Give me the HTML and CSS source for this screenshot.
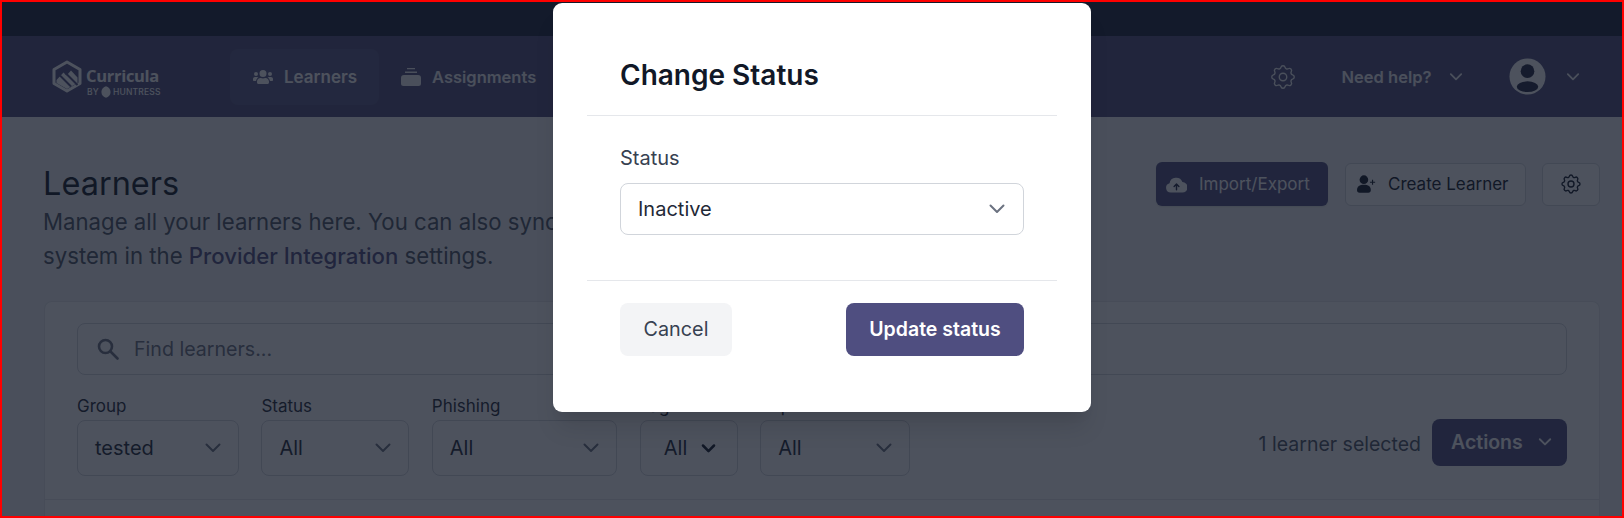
FILE: index.html
```html
<!DOCTYPE html>
<html lang="en">
<head>
<meta charset="utf-8">
<title>Learners</title>
<link rel="stylesheet" href="styles.css">
</head>
<body>
<svg class="defs" aria-hidden="true">
  <symbol id="gear" viewBox="0 0 24 24"><path fill="none" stroke="currentColor" stroke-linecap="round" stroke-linejoin="round" d="M10.325 4.317c.426-1.756 2.924-1.756 3.35 0a1.724 1.724 0 002.573 1.066c1.543-.94 3.31.826 2.37 2.37a1.724 1.724 0 001.065 2.572c1.756.426 1.756 2.924 0 3.35a1.724 1.724 0 00-1.066 2.573c.94 1.543-.826 3.31-2.37 2.37a1.724 1.724 0 00-2.572 1.065c-.426 1.756-2.924 1.756-3.35 0a1.724 1.724 0 00-2.573-1.066c-1.543.94-3.31-.826-2.37-2.37a1.724 1.724 0 00-1.065-2.572c-1.756-.426-1.756-2.924 0-3.35a1.724 1.724 0 001.066-2.573c-.94-1.543.826-3.31 2.37-2.37.996.608 2.296.07 2.572-1.065z"/><circle cx="12" cy="12" r="3" fill="none" stroke="currentColor"/></symbol>
  <symbol id="chev" viewBox="0 0 20 20"><path fill="none" stroke="currentColor" stroke-linecap="round" stroke-linejoin="round" d="M3.500 6.500 10 13l6.500-6.500"/></symbol>
</svg>
<div class="frame">
  <div class="topbar"></div>
  <nav class="nav">
    <div class="logo">
      <svg class="logo-mark" viewBox="0 0 30 33"><path fill="none" stroke="currentColor" stroke-width="3" stroke-linejoin="round" d="M15 2 28 9.500v14L15 31 2 23.500v-14z"/><path fill="currentColor" d="m4.500 20 7-7.500 3 3 4.500-5 6.500 7V23L15 29 4.500 23z"/><path fill="none" stroke="#4f4e7c" stroke-width="2" d="m8 15.500 11 11m-5.500-13.500 12 12"/></svg>
      <div class="logo-text">
        <span class="logo-name">Curricula</span>
        <span class="logo-by">BY <svg class="logo-cone" viewBox="0 0 12 14"><path fill="currentColor" d="M6 0c3 1 5.500 3 5.500 7S9 13 6 14C3 13 .5 11 .5 7S3 1 6 0z"/></svg>HUNTRESS</span>
      </div>
    </div>
    <a class="nav-item nav-active">
      <svg class="nav-icon" viewBox="0 0 640 512"><path fill="currentColor" d="M96 224a64 64 0 1 0 0-128 64 64 0 0 0 0 128zm448 0a64 64 0 1 0 0-128 64 64 0 0 0 0 128zm32 32h-64c-17.600 0-33.500 7.100-45.100 18.600 40.300 22.100 68.900 62 75.100 109.400h66c17.700 0 32-14.300 32-32v-32c0-35.300-28.700-64-64-64zm-256 0a112 112 0 1 0 0-224 112 112 0 0 0 0 224zm76.800 32h-8.300c-20.800 10-43.900 16-68.500 16s-47.600-6-68.500-16h-8.300C179.600 288 128 339.600 128 403.200V432c0 26.500 21.500 48 48 48h288c26.500 0 48-21.500 48-48v-28.800c0-63.600-51.600-115.200-115.200-115.200zm-223.700-13.400C161.500 263.100 145.600 256 128 256H64c-35.300 0-64 28.700-64 64v32c0 17.700 14.300 32 32 32h65.900c6.300-47.400 34.900-87.300 75.200-109.400z"/></svg>
      <span>Learners</span>
    </a>
    <a class="nav-item nav-second">
      <svg class="nav-icon" viewBox="0 0 20 18"><path fill="currentColor" d="M6 0h8v1.300H6zM4 3.500h12v1.500H4zM3 7h14a3 3 0 0 1 3 3v5.500a2.500 2.500 0 0 1-2.500 2.500h-15A2.500 2.500 0 0 1 0 15.500V10a3 3 0 0 1 3-3z"/></svg>
      <span>Assignments</span>
    </a>
    <div class="nav-right">
      <svg class="nav-gear"><use href="#gear"/></svg>
      <span class="help">Need help?</span>
      <svg class="chev-nav"><use href="#chev"/></svg>
      <svg class="avatar" viewBox="0 0 38 38"><defs><clipPath id="av"><circle cx="19" cy="19" r="18.500"/></clipPath></defs><circle cx="19" cy="19" r="18.500" fill="currentColor"/><g clip-path="url(#av)" fill="#212640"><circle cx="19" cy="13.500" r="7"/><ellipse cx="19" cy="29.500" rx="11" ry="5.500"/></g></svg>
      <svg class="chev-nav chev-last"><use href="#chev"/></svg>
    </div>
  </nav>
  <main class="main">
    <header class="page-head">
      <div class="page-title">
        <h1>Learners</h1>
        <p>Manage all your learners here. You can also sync learners from your HR<br>system in the <strong>Provider Integration</strong> settings.</p>
      </div>
      <div class="page-actions">
        <button class="btn btn-primary">
          <svg class="btn-icon" viewBox="0 0 22 17"><path fill="currentColor" d="M5 17a5 5 0 0 1-1.300-9.800A7 7 0 0 1 17.200 6 5.500 5.500 0 0 1 17 17z"/><path fill="none" stroke="#212640" stroke-width="1.500" stroke-linecap="round" stroke-linejoin="round" d="M11 14V8M8.500 10.500 11 8l2.500 2.500"/></svg>
          <span>Import/Export</span>
        </button>
        <button class="btn btn-outline">
          <svg class="btn-icon" viewBox="0 0 22 20"><circle cx="8" cy="5" r="5" fill="currentColor"/><path fill="currentColor" d="M0 17c0-4 3-6 8-6s8 2 8 6c0 2-1 3-3 3H3c-2 0-3-1-3-3z"/><path fill="none" stroke="currentColor" stroke-width="1.300" d="M18 5v6M15 8h6"/></svg>
          <span>Create Learner</span>
        </button>
        <button class="btn btn-outline btn-square" aria-label="Settings"><svg class="btn-gear"><use href="#gear"/></svg></button>
      </div>
    </header>
    <section class="card">
      <div class="card-body">
        <div class="search">
          <svg class="search-icon" viewBox="0 0 22 22"><circle cx="8.500" cy="8.500" r="6.500" fill="none" stroke="currentColor" stroke-width="2.600"/><path stroke="currentColor" stroke-width="2.600" stroke-linecap="round" d="m13.500 13.500 7 7"/></svg>
          <span>Find learners...</span>
        </div>
        <div class="filters">
          <label class="filter f-group"><span class="filter-label">Group</span><span class="select"><span>tested</span><svg class="chev"><use href="#chev"/></svg></span></label>
          <label class="filter f-status"><span class="filter-label">Status</span><span class="select"><span>All</span><svg class="chev"><use href="#chev"/></svg></span></label>
          <label class="filter f-phish"><span class="filter-label">Phishing</span><span class="select"><span>All</span><svg class="chev"><use href="#chev"/></svg></span></label>
          <label class="filter f-tag"><span class="filter-label">Tag</span><span class="select select-tight"><span>All</span><svg class="chev chev-dark"><use href="#chev"/></svg></span></label>
          <label class="filter f-report"><span class="filter-label">Report</span><span class="select"><span>All</span><svg class="chev"><use href="#chev"/></svg></span></label>
          <div class="bulk">
            <span class="bulk-count">1 learner selected</span>
            <button class="btn-actions"><span>Actions</span><svg class="chev-actions"><use href="#chev"/></svg></button>
          </div>
        </div>
      </div>
      <div class="card-rule"></div>
    </section>
  </main>
  <div class="overlay">
    <div class="modal">
      <h2 class="modal-title">Change Status</h2>
      <div class="modal-body">
        <div class="modal-label">Status</div>
        <div class="modal-select"><span>Inactive</span><svg class="modal-chev"><use href="#chev"/></svg></div>
      </div>
      <div class="modal-foot">
        <button class="m-btn m-cancel">Cancel</button>
        <button class="m-btn m-update">Update status</button>
      </div>
    </div>
  </div>
</div>
</body>
</html>
```
FILE: styles.css
```css
* { box-sizing: border-box; }
html, body { margin: 0; padding: 0; }
body { font-family: Inter, "Liberation Sans", sans-serif; background: #f3f4f6; overflow: hidden; }
.defs { position: absolute; width: 0; height: 0; }
svg { display: block; flex: none; stroke-width: 2; }

.frame { position: relative; width: 1624px; height: 518px; border: 2px solid #ff0000; overflow: hidden; background: #f3f4f6; color: #111827; }

.topbar { height: 34px; background: #19203b; }
.nav { height: 81px; background: #4f4e7c; display: flex; align-items: center; padding-left: 50px; color: #fff; }
.logo { display: flex; align-items: center; gap: 4px; width: 178px; }
.logo-mark { width: 30px; height: 33px; color: #fff; }
.logo-text { display: flex; flex-direction: column; }
.logo-name { font-family: "Open Sans", sans-serif; font-weight: 700; font-size: 16.500px; line-height: 20px; letter-spacing: -0.3px; margin-top: 10px; }
.logo-by { display: flex; align-items: center; gap: 2px; font-size: 8.500px; font-weight: 500; line-height: 12px; margin-left: 1px; letter-spacing: 0.2px; }
.logo-cone { width: 10px; height: 12px; }
.nav-item { display: flex; align-items: center; gap: 11px; height: 56px; padding: 0 23px; border-radius: 8px; font-size: 17px; font-weight: 600; color: #fff; }
.nav-active { background: #5a5986; width: 149px; }
.nav-second { font-size: 16.500px; padding-left: 22px; color: #f3f4f6; }
.nav-icon { width: 20px; height: 18px; }
.nav-right { margin-left: auto; display: flex; align-items: center; color: #f3f4f6; padding-right: 41px; }
.nav-gear { width: 30px; height: 30px; margin-right: 44px; stroke-width: 1.100; }
.help { font-size: 16.500px; font-weight: 600; }
.chev-nav { width: 16px; height: 16px; margin-left: 16.500px; stroke-width: 2.200; }
.avatar { width: 37px; height: 37px; margin-left: 45px; color: #fff; }
.chev-last { margin-left: 19px; }

.main { padding: 42px 22px 0 42px; }
.page-head { display: flex; justify-content: space-between; align-items: flex-start; }
.page-title { margin-left: -1px; }
.page-title h1 { margin: 4px 0 0; font-size: 32.500px; line-height: 42px; font-weight: 400; color: #111827; }
.page-title p { margin: 0; font-size: 22.200px; line-height: 34px; color: #4b5563; }
.page-title strong { font-weight: 500; color: #4f4e80; }
.page-actions { display: flex; align-items: center; gap: 17px; margin-top: 3px; }
.btn { display: flex; align-items: center; font-family: inherit; font-size: 17px; border-radius: 6px; height: 44px; }
.btn-primary { background: #4f4e80; border: 0; color: #fff; width: 172px; padding: 0 0 0 10px; gap: 12px; box-shadow: 0 1px 2px rgba(0,0,0,.1); }
.btn-outline { background: #fff; border: 1px solid #d1d5db; color: #111827; width: 181px; height: 43px; padding: 0 0 0 11px; gap: 12px; }
.btn-square { width: 58px; justify-content: center; padding: 0; margin-left: -1px; }
.btn-icon { width: 19px; height: 18px; flex: none; }
.btn-primary .btn-icon { width: 21px; height: 17px; color: #fff; }
.btn-gear { width: 24px; height: 24px; stroke-width: 1.400; }

.card { margin-top: 28px; background: #fff; border: 1px solid #e5e7eb; border-bottom: 0; border-radius: 8px 8px 0 0; height: 240px; }
.card-body { padding: 21px 32px 0 32px; }
.search { display: flex; align-items: center; gap: 15px; height: 52px; padding-left: 19px; border: 1px solid #d1d5db; border-radius: 8px; color: #6b7280; font-size: 19.600px; }
.search-icon { width: 22px; height: 22px; color: #6b7280; }
.filters { display: flex; align-items: flex-end; gap: 22.400px; margin-top: 22px; }
.filter { display: flex; flex-direction: column; }
.filter-label { font-size: 17px; line-height: 18px; color: #1f2937; height: 23px; }
.f-group { width: 162px; }
.f-status { width: 148px; }
.f-phish { width: 185.600px; }
.f-tag { width: 98px; }
.f-report { width: 150px; }
.select { display: flex; align-items: center; justify-content: space-between; height: 56px; padding: 0 15.500px 0 17px; border: 1px solid #d1d5db; border-radius: 8px; font-size: 20px; color: #1f2937; background: #fff; }
.select-tight { padding: 0 20px 0 23px; }
.chev { width: 20px; height: 20px; color: #6b7280; }
.chev-dark { width: 17px; height: 17px; color: #111827; stroke-width: 3; }
.bulk { margin-left: auto; display: flex; align-items: center; align-self: flex-end; height: 47px; margin-bottom: 10px; }
.bulk-count { font-size: 19.500px; color: #4b5563; margin: 2px 11px 0 0; }
.btn-actions { display: flex; align-items: center; width: 135px; height: 47px; padding: 0 0 2px 19px; border: 0; border-radius: 8px; background: #4f4e80; color: #fff; font-family: inherit; font-size: 19.500px; font-weight: 600; }
.chev-actions { width: 16px; height: 16px; margin-left: 14px; stroke-width: 2.400; }
.card-rule { height: 1px; background: #e5e7eb; margin-top: 23px; }

.overlay { position: absolute; inset: 0; background: rgba(17,24,39,.75); padding: 1px 0 0 551px; }
.modal { width: 538px; height: 409px; background: #fff; border-radius: 9px; padding: 0 34px; box-shadow: 0 20px 25px -5px rgba(0,0,0,.1), 0 10px 10px -5px rgba(0,0,0,.04); }
.modal-title { margin: 0; height: 113px; padding: 55px 0 0 33px; font-size: 28px; line-height: 34px; font-weight: 600; color: #111827; border-bottom: 1px solid #e5e7eb; }
.modal-body { height: 165px; padding: 30px 33px 0; border-bottom: 1px solid #e5e7eb; }
.modal-label { font-size: 20px; line-height: 24px; color: #374151; }
.modal-select { display: flex; align-items: center; justify-content: space-between; height: 52px; margin-top: 13px; padding: 0 16px 0 17px; border: 1px solid #d1d5db; border-radius: 8px; font-size: 20px; color: #1f2937; }
.modal-chev { width: 20px; height: 20px; color: #6b7280; }
.modal-foot { display: flex; justify-content: space-between; padding: 22px 33px 0; }
.m-btn { height: 53px; border: 0; border-radius: 8px; font-family: inherit; font-size: 20px; padding: 0 0 2px; }
.m-cancel { width: 112px; background: #f3f4f6; color: #374151; font-size: 19.800px; }
.m-update { width: 178px; background: #4f4e80; color: #fff; font-size: 19.500px; font-weight: 600; }
```
